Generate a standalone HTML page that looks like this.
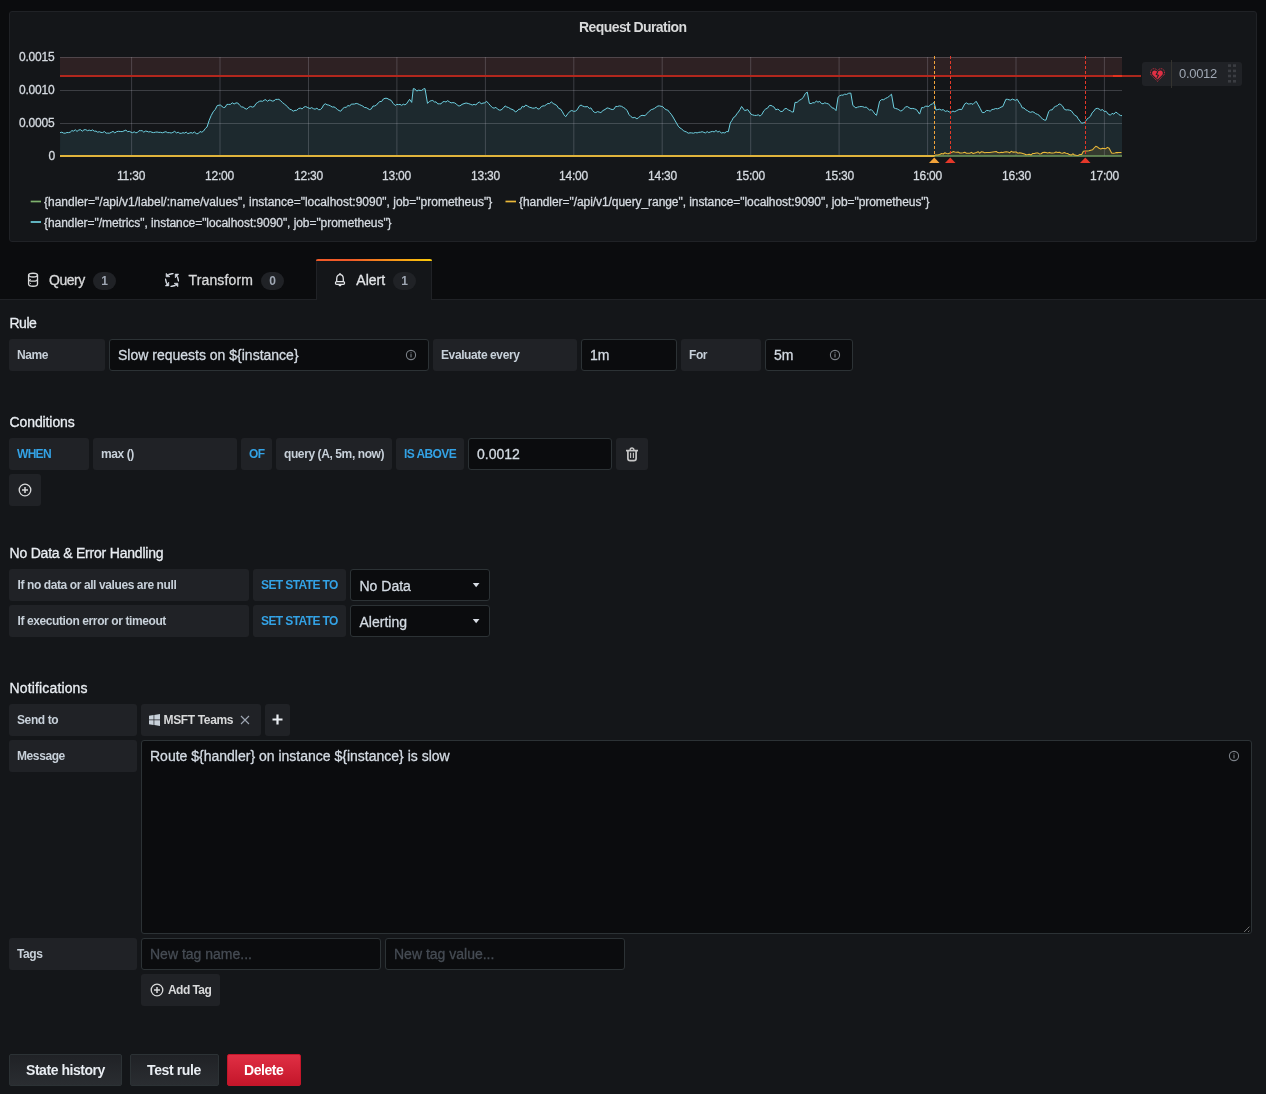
<!DOCTYPE html>
<html><head><meta charset="utf-8">
<style>
*{box-sizing:border-box;margin:0;padding:0}
body{will-change:transform}html,body{width:1266px;height:1094px;overflow:hidden;background:#141619;font-family:"Liberation Sans",sans-serif;color:#c7d0d9}
.abs{position:absolute}
.top{position:absolute;left:0;top:0;width:1266px;height:299px;background:#0b0c0e}
.panel{position:absolute;left:9px;top:11px;width:1248px;height:231px;background:#141619;border:1px solid #202226;border-radius:3px}
.t{position:absolute;white-space:nowrap;line-height:1}
.ax{font-size:12px;color:#d5dae0}
.lg{font-size:12px;color:#d5dae0}
.tabline{position:absolute;left:0;top:299px;width:1266px;height:1px;background:#202226}
.tab{position:absolute;top:259px;height:40px;font-size:14px;color:#c7d0d9}
.badge{position:absolute;height:18px;border-radius:9px;background:#202226;color:#9fa7b3;font-size:12px;font-weight:700;text-align:center;line-height:18px}
.activetab{position:absolute;left:316px;top:259px;width:116px;height:41px;background:#141619;border-left:1px solid #202226;border-right:1px solid #202226}
.activetab:before{content:"";position:absolute;left:-1px;right:-1px;top:0;height:2px;background:linear-gradient(to right,#f05a28 30%,#fbca0a 99%);border-radius:2px 2px 0 0}
.h{font-size:14px;color:#e9edf2}
.lbl{position:absolute;height:32px;background:#202226;border-radius:3px;font-size:12px;font-weight:700;color:#c7d0d9}
.lbl span,.inp span,.btn span{position:absolute;white-space:nowrap;line-height:1}
.inp{position:absolute;height:32px;background:#0b0c0e;border:1px solid #2c3235;border-radius:3px;font-size:14px;color:#d3dae2}
.blue{color:#33a2e5}
.btn{position:absolute;height:32px;border-radius:2px;background:linear-gradient(180deg,#202226 0%,#2a2d31 100%);border:1px solid #2c3235;font-size:14px;font-weight:700;color:#e9edf2}
.rs{-webkit-text-stroke:0.3px currentColor}
.inp span,.h,.ax,.lg{-webkit-text-stroke:0.3px currentColor}
</style></head><body>
<div class="top"></div>
<div class="panel"></div>
<div class="t" style="left:579px;top:20px;font-size:14px;font-weight:700;color:#d8d9da;letter-spacing:-0.58px">Request Duration</div>
<svg class="abs" style="left:0;top:0" width="1266" height="300" viewBox="0 0 1266 300">
<rect x="60" y="57" width="1062" height="19" fill="#2e2123"/>
<path d="M60.1,132.6 L61.8,132.2 L63.6,133.1 L65.3,133.2 L66.9,132.5 L68.6,132.6 L70.2,132.2 L71.9,130.6 L73.5,131.1 L75.3,129.8 L77.0,131.4 L78.8,130.0 L80.5,129.7 L82.3,131.2 L84.0,129.8 L85.8,129.7 L87.5,130.7 L89.2,130.1 L90.9,130.7 L92.6,129.9 L94.3,131.2 L96.0,131.1 L97.7,132.2 L99.3,131.7 L101.0,132.4 L102.7,132.5 L104.4,131.5 L106.1,133.2 L107.7,133.1 L109.4,133.2 L111.2,132.4 L113.0,131.4 L114.8,132.9 L116.6,131.7 L118.5,131.3 L120.3,131.5 L122.2,131.6 L124.0,130.9 L125.9,130.1 L127.6,131.7 L129.3,131.3 L131.0,132.2 L132.6,132.7 L134.2,131.8 L135.8,132.8 L137.4,132.5 L139.0,130.7 L140.6,130.7 L142.2,130.7 L143.8,132.2 L145.4,131.1 L147.0,131.3 L148.7,132.0 L150.3,131.6 L152.0,132.3 L153.6,132.6 L155.4,132.2 L157.1,132.0 L158.9,132.4 L160.6,132.3 L162.4,132.8 L164.1,132.2 L165.9,131.7 L167.7,132.7 L169.4,132.6 L171.2,133.0 L172.9,132.4 L174.7,131.3 L176.4,132.9 L178.2,132.2 L179.8,133.3 L181.4,133.3 L183.0,132.7 L184.6,133.1 L186.2,132.1 L187.8,133.6 L189.4,133.1 L191.0,132.6 L192.6,133.2 L194.4,132.0 L196.3,133.6 L198.1,133.7 L200.0,131.5 L201.8,132.2 L203.5,131.1 L205.3,128.5 L207.0,127.0 L209.1,120.6 L211.1,115.7 L213.2,111.8 L215.2,109.5 L217.3,105.5 L220.3,105.0 L223.4,107.5 L225.1,107.3 L226.9,104.4 L228.6,104.4 L230.4,104.4 L232.3,102.8 L234.1,104.0 L236.0,102.9 L237.8,103.0 L239.6,105.2 L241.4,106.8 L243.2,107.1 L245.0,108.5 L246.8,109.2 L248.7,107.3 L250.5,106.4 L252.4,107.1 L254.2,106.5 L255.9,103.7 L257.7,102.4 L259.4,101.3 L261.0,101.0 L262.6,101.3 L264.2,100.1 L265.9,99.7 L267.5,101.4 L269.1,100.0 L270.7,100.3 L272.3,101.1 L274.0,100.8 L275.6,99.4 L277.3,99.4 L278.9,99.3 L280.7,100.8 L282.5,102.6 L284.3,104.0 L286.0,105.4 L287.8,107.0 L289.6,109.2 L291.4,109.7 L293.2,111.2 L295.0,110.4 L296.7,110.3 L298.5,108.6 L300.3,108.1 L302.1,108.9 L303.8,107.2 L305.6,106.5 L307.8,107.6 L310.0,108.5 L311.7,107.6 L313.4,108.7 L315.1,109.2 L316.9,108.2 L318.6,109.7 L320.3,109.6 L322.0,108.0 L323.7,104.8 L325.4,103.8 L327.1,104.8 L328.8,105.1 L330.5,105.9 L332.2,107.0 L334.0,106.9 L335.7,107.9 L337.4,109.5 L339.1,110.6 L340.8,111.2 L342.6,108.7 L344.4,107.4 L346.2,107.3 L348.0,105.5 L349.6,106.1 L351.3,104.1 L352.9,104.1 L354.6,104.0 L356.2,103.4 L357.9,103.8 L359.6,104.7 L361.2,105.3 L362.9,106.2 L364.6,107.5 L366.2,107.6 L367.9,108.6 L369.6,109.6 L371.3,108.9 L373.0,106.0 L374.7,106.0 L376.4,105.1 L378.2,102.9 L379.9,101.5 L381.6,101.5 L383.3,99.0 L385.0,98.3 L387.0,98.3 L389.1,99.5 L391.1,100.3 L393.1,103.3 L395.2,105.5 L396.8,104.4 L398.4,104.6 L400.0,104.4 L401.7,105.3 L403.3,104.2 L404.9,104.8 L406.5,103.8 L409.6,99.3 L411.7,102.4 L413.3,88.6 L415.1,89.1 L416.8,91.1 L418.4,90.2 L420.1,90.4 L421.7,90.4 L423.4,89.0 L425.0,88.6 L427.5,103.4 L429.4,101.4 L431.2,100.7 L432.8,100.5 L434.5,102.0 L436.1,101.9 L437.8,103.9 L439.4,103.8 L441.0,103.9 L442.7,101.9 L444.3,101.5 L446.0,102.0 L447.6,100.7 L449.4,101.8 L451.1,102.9 L452.9,102.6 L454.6,102.9 L456.4,104.0 L458.1,105.8 L459.9,105.9 L462.0,104.4 L464.0,103.6 L466.1,103.0 L468.2,103.5 L470.2,104.2 L472.3,105.0 L474.1,104.3 L475.9,105.0 L477.7,102.9 L479.5,102.1 L481.2,103.7 L483.0,103.1 L484.8,102.8 L486.6,101.3 L488.6,103.5 L490.7,105.9 L492.4,107.6 L494.1,108.2 L495.9,107.3 L497.6,109.2 L499.3,110.1 L501.0,110.0 L503.1,108.3 L505.1,105.9 L506.8,107.0 L508.5,107.5 L510.2,108.6 L512.0,109.4 L513.7,110.0 L515.4,112.0 L517.1,111.0 L518.8,109.2 L520.5,109.2 L522.3,106.3 L524.0,107.1 L525.7,105.0 L527.5,106.0 L529.2,107.1 L531.0,107.6 L532.7,108.2 L534.5,108.1 L536.2,107.4 L538.0,109.1 L539.7,108.7 L541.3,106.6 L543.0,105.9 L544.6,105.8 L546.3,104.6 L548.0,103.4 L549.6,103.7 L551.3,101.8 L553.2,103.5 L555.0,104.4 L556.9,105.6 L558.7,108.4 L560.6,109.1 L562.3,111.6 L564.0,114.8 L565.7,116.7 L567.9,113.6 L570.1,111.2 L571.8,110.5 L573.6,111.3 L575.3,111.2 L577.2,109.8 L579.1,106.3 L581.0,105.0 L582.6,106.0 L584.3,106.7 L586.0,106.8 L587.6,106.5 L589.2,108.4 L590.9,107.9 L592.5,110.4 L594.2,112.2 L595.8,112.6 L597.5,111.6 L599.2,112.1 L600.9,112.6 L603.0,110.5 L605.0,109.5 L607.1,107.9 L608.8,108.3 L610.5,109.0 L612.2,109.6 L613.9,109.2 L615.7,106.4 L617.4,106.5 L619.4,105.9 L621.5,106.3 L623.5,107.5 L625.4,108.7 L627.2,110.7 L629.1,114.7 L630.9,116.5 L632.8,117.8 L634.8,117.4 L636.9,118.8 L638.6,117.6 L640.3,116.1 L642.0,115.3 L645.1,115.7 L647.2,113.3 L649.2,111.3 L651.3,109.6 L652.9,109.2 L654.6,108.3 L656.2,107.1 L657.9,106.0 L659.5,105.9 L661.1,106.3 L662.8,106.7 L664.4,108.5 L666.1,109.7 L667.7,110.0 L669.5,112.3 L671.2,114.2 L673.0,117.0 L674.7,120.0 L676.5,123.1 L678.2,126.1 L680.0,128.0 L681.6,128.8 L683.3,130.7 L684.9,131.4 L686.6,132.0 L688.2,133.2 L690.0,132.8 L691.7,132.9 L693.5,133.2 L695.3,132.5 L697.1,132.9 L698.8,132.3 L700.6,132.2 L702.2,131.7 L703.9,132.4 L705.5,132.9 L707.2,131.6 L708.8,132.6 L710.6,131.9 L712.4,131.4 L714.2,131.9 L716.0,130.5 L717.8,132.0 L719.5,131.3 L721.3,133.0 L723.1,132.6 L724.8,132.9 L726.6,131.5 L728.3,131.7 L730.3,122.9 L731.9,120.5 L733.5,117.4 L735.1,116.6 L736.8,113.9 L738.4,112.0 L740.0,109.5 L741.6,106.5 L744.7,110.6 L747.8,109.6 L750.9,114.1 L752.7,114.9 L754.6,115.4 L756.4,115.4 L758.3,114.8 L760.1,116.1 L762.0,114.2 L763.8,110.8 L765.7,109.0 L767.5,108.2 L769.4,105.5 L771.0,105.4 L772.6,106.3 L774.2,107.2 L775.8,109.8 L777.4,109.2 L779.0,109.7 L780.6,111.6 L782.7,111.3 L784.7,108.7 L786.8,108.5 L788.4,110.1 L790.1,110.6 L791.8,111.9 L793.4,112.0 L795.0,102.4 L797.1,102.4 L799.1,100.5 L801.2,99.3 L803.2,97.6 L805.3,93.5 L807.3,92.1 L809.4,103.4 L811.1,103.6 L812.8,102.7 L814.5,102.8 L816.3,101.1 L818.0,102.2 L819.7,101.3 L821.4,103.5 L823.1,103.8 L824.8,102.8 L826.5,103.4 L828.2,103.8 L830.2,105.6 L832.1,107.9 L834.0,108.3 L836.0,110.6 L838.1,97.2 L839.7,95.7 L841.4,95.1 L843.0,95.2 L844.6,94.2 L846.7,94.4 L848.7,93.2 L850.8,93.1 L852.9,105.5 L855.9,107.9 L857.6,107.1 L859.4,106.7 L861.1,106.5 L862.8,106.7 L864.5,107.4 L866.2,107.1 L867.9,108.6 L869.6,110.1 L871.3,109.6 L873.0,111.3 L874.8,113.9 L876.5,115.3 L879.6,101.3 L881.6,99.6 L883.7,99.7 L885.7,98.3 L887.6,97.5 L889.6,95.9 L891.5,94.2 L893.9,107.9 L895.6,108.5 L897.2,108.9 L898.9,109.8 L900.5,110.9 L902.2,110.6 L903.9,108.5 L905.6,107.0 L907.3,106.5 L909.1,107.7 L911.0,108.7 L912.8,108.4 L914.7,108.9 L916.5,109.6 L919.6,114.1 L921.7,107.5 L923.5,107.7 L925.3,106.3 L927.1,106.2 L928.9,106.5 L930.6,104.5 L932.3,104.0 L934.0,102.4 L936.0,110.0 L937.8,109.5 L939.6,109.2 L941.4,110.1 L943.2,109.6 L945.3,111.4 L947.3,110.8 L949.4,112.0 L951.2,112.1 L952.9,111.1 L954.7,111.7 L956.4,110.8 L958.2,109.8 L959.9,109.3 L961.7,109.6 L964.8,103.8 L966.4,102.9 L968.1,104.0 L969.7,103.9 L971.4,103.6 L973.0,104.4 L976.1,101.3 L978.2,104.8 L980.2,108.4 L982.3,112.6 L984.3,112.5 L986.4,110.5 L988.4,110.6 L990.2,111.2 L992.0,109.5 L993.8,109.3 L995.6,108.5 L997.4,108.8 L999.2,108.2 L1001.0,107.1 L1002.8,106.5 L1005.9,99.3 L1007.5,99.3 L1009.1,99.8 L1010.7,100.1 L1012.4,99.1 L1014.0,99.8 L1015.6,100.3 L1017.2,99.3 L1018.9,102.1 L1020.6,104.4 L1022.3,107.9 L1024.0,108.0 L1025.7,109.8 L1027.3,110.5 L1029.0,111.8 L1030.7,112.3 L1032.3,111.7 L1034.0,112.3 L1035.7,113.7 L1037.4,114.3 L1039.1,115.2 L1040.8,117.4 L1042.5,118.8 L1044.2,120.0 L1045.9,120.2 L1048.7,111.7 L1050.4,109.9 L1052.2,109.9 L1053.9,107.4 L1055.6,106.3 L1057.4,105.7 L1059.1,103.9 L1060.8,104.5 L1062.6,106.1 L1064.3,109.2 L1066.1,110.0 L1067.8,109.8 L1069.6,110.2 L1071.3,110.8 L1073.0,113.1 L1074.8,115.4 L1076.5,116.0 L1078.2,118.8 L1080.0,121.1 L1081.7,123.3 L1083.5,122.7 L1085.2,122.1 L1086.9,119.2 L1088.7,117.8 L1090.4,116.4 L1092.1,112.9 L1093.9,111.0 L1095.6,108.7 L1097.3,108.3 L1099.1,109.0 L1100.8,110.3 L1102.5,109.5 L1104.3,111.6 L1106.0,111.2 L1108.2,114.1 L1110.4,115.2 L1112.1,113.3 L1113.9,114.2 L1115.6,112.2 L1117.2,112.8 L1118.8,114.5 L1120.4,115.4 L1122.0,115.7 L1122,156 L60,156 Z" fill="#1d292e"/>
<path d="M934.1,155.8 L936.0,154.9 L937.9,155.0 L939.7,154.4 L941.6,153.6 L943.2,154.0 L944.9,152.8 L946.5,153.5 L948.2,153.7 L949.9,153.0 L951.5,152.5 L953.1,151.6 L954.8,152.1 L956.5,152.2 L958.1,152.1 L959.8,152.9 L961.5,152.9 L963.1,152.8 L964.8,152.3 L966.5,153.2 L968.1,153.3 L969.8,153.2 L971.4,152.4 L973.1,153.5 L974.8,152.9 L976.4,152.4 L978.1,151.7 L979.7,153.2 L981.4,151.7 L983.0,152.0 L984.7,152.7 L986.3,152.5 L988.0,152.4 L989.7,152.6 L991.3,152.2 L993.0,151.9 L994.6,151.7 L996.3,151.5 L997.9,152.6 L999.6,152.7 L1001.2,152.3 L1002.9,152.6 L1004.6,151.9 L1006.2,151.7 L1007.9,151.9 L1009.5,152.8 L1011.2,151.3 L1012.8,152.1 L1014.5,152.1 L1016.2,152.0 L1017.8,153.2 L1019.5,152.8 L1021.1,153.0 L1022.8,153.5 L1024.5,154.0 L1026.1,154.8 L1027.8,154.6 L1029.5,154.2 L1031.1,154.9 L1032.8,153.4 L1034.4,153.5 L1036.1,153.0 L1037.8,152.9 L1039.4,153.9 L1041.1,153.7 L1042.8,152.5 L1044.4,152.3 L1046.1,152.6 L1047.7,153.0 L1049.4,152.4 L1051.1,153.0 L1052.7,153.0 L1054.4,152.8 L1056.0,152.1 L1057.7,152.6 L1059.4,152.3 L1061.0,153.0 L1062.7,153.2 L1064.3,152.6 L1066.0,153.2 L1067.7,153.5 L1069.3,154.6 L1071.1,155.1 L1072.8,153.8 L1074.6,155.1 L1076.4,155.3 L1078.2,155.4 L1079.9,154.4 L1081.7,154.6 L1083.4,151.3 L1085.2,151.1 L1087.1,150.9 L1089.0,150.8 L1090.8,150.3 L1092.5,149.8 L1094.1,148.0 L1095.8,146.3 L1097.4,146.9 L1099.1,148.3 L1100.8,148.9 L1102.4,148.3 L1104.1,148.5 L1105.8,148.7 L1107.4,147.4 L1109.1,148.3 L1111.6,152.9 L1113.2,153.3 L1114.9,153.0 L1116.5,152.6 L1118.2,152.6 L1119.8,152.4 L1121.5,152.4 L1122,156 L60,156 Z" fill="rgba(234,184,57,0.12)"/>
<g stroke="rgba(204,204,220,0.22)" stroke-width="1"><line x1="131.6" y1="57" x2="131.6" y2="156"/><line x1="220.0" y1="57" x2="220.0" y2="156"/><line x1="308.5" y1="57" x2="308.5" y2="156"/><line x1="396.9" y1="57" x2="396.9" y2="156"/><line x1="485.4" y1="57" x2="485.4" y2="156"/><line x1="573.8" y1="57" x2="573.8" y2="156"/><line x1="662.2" y1="57" x2="662.2" y2="156"/><line x1="750.7" y1="57" x2="750.7" y2="156"/><line x1="839.1" y1="57" x2="839.1" y2="156"/><line x1="927.6" y1="57" x2="927.6" y2="156"/><line x1="1016.0" y1="57" x2="1016.0" y2="156"/><line x1="1104.4" y1="57" x2="1104.4" y2="156"/><line x1="60" y1="57.5" x2="1122" y2="57.5"/><line x1="60" y1="90.5" x2="1122" y2="90.5"/><line x1="60" y1="123.5" x2="1122" y2="123.5"/></g>
<path d="M934,156 L1122,156" stroke="#6f9a5f" stroke-width="1.5" fill="none"/><path d="M60,156 L934.5,156" stroke="#e0b43c" stroke-width="2" fill="none"/>
<path d="M60.1,132.6 L61.8,132.2 L63.6,133.1 L65.3,133.2 L66.9,132.5 L68.6,132.6 L70.2,132.2 L71.9,130.6 L73.5,131.1 L75.3,129.8 L77.0,131.4 L78.8,130.0 L80.5,129.7 L82.3,131.2 L84.0,129.8 L85.8,129.7 L87.5,130.7 L89.2,130.1 L90.9,130.7 L92.6,129.9 L94.3,131.2 L96.0,131.1 L97.7,132.2 L99.3,131.7 L101.0,132.4 L102.7,132.5 L104.4,131.5 L106.1,133.2 L107.7,133.1 L109.4,133.2 L111.2,132.4 L113.0,131.4 L114.8,132.9 L116.6,131.7 L118.5,131.3 L120.3,131.5 L122.2,131.6 L124.0,130.9 L125.9,130.1 L127.6,131.7 L129.3,131.3 L131.0,132.2 L132.6,132.7 L134.2,131.8 L135.8,132.8 L137.4,132.5 L139.0,130.7 L140.6,130.7 L142.2,130.7 L143.8,132.2 L145.4,131.1 L147.0,131.3 L148.7,132.0 L150.3,131.6 L152.0,132.3 L153.6,132.6 L155.4,132.2 L157.1,132.0 L158.9,132.4 L160.6,132.3 L162.4,132.8 L164.1,132.2 L165.9,131.7 L167.7,132.7 L169.4,132.6 L171.2,133.0 L172.9,132.4 L174.7,131.3 L176.4,132.9 L178.2,132.2 L179.8,133.3 L181.4,133.3 L183.0,132.7 L184.6,133.1 L186.2,132.1 L187.8,133.6 L189.4,133.1 L191.0,132.6 L192.6,133.2 L194.4,132.0 L196.3,133.6 L198.1,133.7 L200.0,131.5 L201.8,132.2 L203.5,131.1 L205.3,128.5 L207.0,127.0 L209.1,120.6 L211.1,115.7 L213.2,111.8 L215.2,109.5 L217.3,105.5 L220.3,105.0 L223.4,107.5 L225.1,107.3 L226.9,104.4 L228.6,104.4 L230.4,104.4 L232.3,102.8 L234.1,104.0 L236.0,102.9 L237.8,103.0 L239.6,105.2 L241.4,106.8 L243.2,107.1 L245.0,108.5 L246.8,109.2 L248.7,107.3 L250.5,106.4 L252.4,107.1 L254.2,106.5 L255.9,103.7 L257.7,102.4 L259.4,101.3 L261.0,101.0 L262.6,101.3 L264.2,100.1 L265.9,99.7 L267.5,101.4 L269.1,100.0 L270.7,100.3 L272.3,101.1 L274.0,100.8 L275.6,99.4 L277.3,99.4 L278.9,99.3 L280.7,100.8 L282.5,102.6 L284.3,104.0 L286.0,105.4 L287.8,107.0 L289.6,109.2 L291.4,109.7 L293.2,111.2 L295.0,110.4 L296.7,110.3 L298.5,108.6 L300.3,108.1 L302.1,108.9 L303.8,107.2 L305.6,106.5 L307.8,107.6 L310.0,108.5 L311.7,107.6 L313.4,108.7 L315.1,109.2 L316.9,108.2 L318.6,109.7 L320.3,109.6 L322.0,108.0 L323.7,104.8 L325.4,103.8 L327.1,104.8 L328.8,105.1 L330.5,105.9 L332.2,107.0 L334.0,106.9 L335.7,107.9 L337.4,109.5 L339.1,110.6 L340.8,111.2 L342.6,108.7 L344.4,107.4 L346.2,107.3 L348.0,105.5 L349.6,106.1 L351.3,104.1 L352.9,104.1 L354.6,104.0 L356.2,103.4 L357.9,103.8 L359.6,104.7 L361.2,105.3 L362.9,106.2 L364.6,107.5 L366.2,107.6 L367.9,108.6 L369.6,109.6 L371.3,108.9 L373.0,106.0 L374.7,106.0 L376.4,105.1 L378.2,102.9 L379.9,101.5 L381.6,101.5 L383.3,99.0 L385.0,98.3 L387.0,98.3 L389.1,99.5 L391.1,100.3 L393.1,103.3 L395.2,105.5 L396.8,104.4 L398.4,104.6 L400.0,104.4 L401.7,105.3 L403.3,104.2 L404.9,104.8 L406.5,103.8 L409.6,99.3 L411.7,102.4 L413.3,88.6 L415.1,89.1 L416.8,91.1 L418.4,90.2 L420.1,90.4 L421.7,90.4 L423.4,89.0 L425.0,88.6 L427.5,103.4 L429.4,101.4 L431.2,100.7 L432.8,100.5 L434.5,102.0 L436.1,101.9 L437.8,103.9 L439.4,103.8 L441.0,103.9 L442.7,101.9 L444.3,101.5 L446.0,102.0 L447.6,100.7 L449.4,101.8 L451.1,102.9 L452.9,102.6 L454.6,102.9 L456.4,104.0 L458.1,105.8 L459.9,105.9 L462.0,104.4 L464.0,103.6 L466.1,103.0 L468.2,103.5 L470.2,104.2 L472.3,105.0 L474.1,104.3 L475.9,105.0 L477.7,102.9 L479.5,102.1 L481.2,103.7 L483.0,103.1 L484.8,102.8 L486.6,101.3 L488.6,103.5 L490.7,105.9 L492.4,107.6 L494.1,108.2 L495.9,107.3 L497.6,109.2 L499.3,110.1 L501.0,110.0 L503.1,108.3 L505.1,105.9 L506.8,107.0 L508.5,107.5 L510.2,108.6 L512.0,109.4 L513.7,110.0 L515.4,112.0 L517.1,111.0 L518.8,109.2 L520.5,109.2 L522.3,106.3 L524.0,107.1 L525.7,105.0 L527.5,106.0 L529.2,107.1 L531.0,107.6 L532.7,108.2 L534.5,108.1 L536.2,107.4 L538.0,109.1 L539.7,108.7 L541.3,106.6 L543.0,105.9 L544.6,105.8 L546.3,104.6 L548.0,103.4 L549.6,103.7 L551.3,101.8 L553.2,103.5 L555.0,104.4 L556.9,105.6 L558.7,108.4 L560.6,109.1 L562.3,111.6 L564.0,114.8 L565.7,116.7 L567.9,113.6 L570.1,111.2 L571.8,110.5 L573.6,111.3 L575.3,111.2 L577.2,109.8 L579.1,106.3 L581.0,105.0 L582.6,106.0 L584.3,106.7 L586.0,106.8 L587.6,106.5 L589.2,108.4 L590.9,107.9 L592.5,110.4 L594.2,112.2 L595.8,112.6 L597.5,111.6 L599.2,112.1 L600.9,112.6 L603.0,110.5 L605.0,109.5 L607.1,107.9 L608.8,108.3 L610.5,109.0 L612.2,109.6 L613.9,109.2 L615.7,106.4 L617.4,106.5 L619.4,105.9 L621.5,106.3 L623.5,107.5 L625.4,108.7 L627.2,110.7 L629.1,114.7 L630.9,116.5 L632.8,117.8 L634.8,117.4 L636.9,118.8 L638.6,117.6 L640.3,116.1 L642.0,115.3 L645.1,115.7 L647.2,113.3 L649.2,111.3 L651.3,109.6 L652.9,109.2 L654.6,108.3 L656.2,107.1 L657.9,106.0 L659.5,105.9 L661.1,106.3 L662.8,106.7 L664.4,108.5 L666.1,109.7 L667.7,110.0 L669.5,112.3 L671.2,114.2 L673.0,117.0 L674.7,120.0 L676.5,123.1 L678.2,126.1 L680.0,128.0 L681.6,128.8 L683.3,130.7 L684.9,131.4 L686.6,132.0 L688.2,133.2 L690.0,132.8 L691.7,132.9 L693.5,133.2 L695.3,132.5 L697.1,132.9 L698.8,132.3 L700.6,132.2 L702.2,131.7 L703.9,132.4 L705.5,132.9 L707.2,131.6 L708.8,132.6 L710.6,131.9 L712.4,131.4 L714.2,131.9 L716.0,130.5 L717.8,132.0 L719.5,131.3 L721.3,133.0 L723.1,132.6 L724.8,132.9 L726.6,131.5 L728.3,131.7 L730.3,122.9 L731.9,120.5 L733.5,117.4 L735.1,116.6 L736.8,113.9 L738.4,112.0 L740.0,109.5 L741.6,106.5 L744.7,110.6 L747.8,109.6 L750.9,114.1 L752.7,114.9 L754.6,115.4 L756.4,115.4 L758.3,114.8 L760.1,116.1 L762.0,114.2 L763.8,110.8 L765.7,109.0 L767.5,108.2 L769.4,105.5 L771.0,105.4 L772.6,106.3 L774.2,107.2 L775.8,109.8 L777.4,109.2 L779.0,109.7 L780.6,111.6 L782.7,111.3 L784.7,108.7 L786.8,108.5 L788.4,110.1 L790.1,110.6 L791.8,111.9 L793.4,112.0 L795.0,102.4 L797.1,102.4 L799.1,100.5 L801.2,99.3 L803.2,97.6 L805.3,93.5 L807.3,92.1 L809.4,103.4 L811.1,103.6 L812.8,102.7 L814.5,102.8 L816.3,101.1 L818.0,102.2 L819.7,101.3 L821.4,103.5 L823.1,103.8 L824.8,102.8 L826.5,103.4 L828.2,103.8 L830.2,105.6 L832.1,107.9 L834.0,108.3 L836.0,110.6 L838.1,97.2 L839.7,95.7 L841.4,95.1 L843.0,95.2 L844.6,94.2 L846.7,94.4 L848.7,93.2 L850.8,93.1 L852.9,105.5 L855.9,107.9 L857.6,107.1 L859.4,106.7 L861.1,106.5 L862.8,106.7 L864.5,107.4 L866.2,107.1 L867.9,108.6 L869.6,110.1 L871.3,109.6 L873.0,111.3 L874.8,113.9 L876.5,115.3 L879.6,101.3 L881.6,99.6 L883.7,99.7 L885.7,98.3 L887.6,97.5 L889.6,95.9 L891.5,94.2 L893.9,107.9 L895.6,108.5 L897.2,108.9 L898.9,109.8 L900.5,110.9 L902.2,110.6 L903.9,108.5 L905.6,107.0 L907.3,106.5 L909.1,107.7 L911.0,108.7 L912.8,108.4 L914.7,108.9 L916.5,109.6 L919.6,114.1 L921.7,107.5 L923.5,107.7 L925.3,106.3 L927.1,106.2 L928.9,106.5 L930.6,104.5 L932.3,104.0 L934.0,102.4 L936.0,110.0 L937.8,109.5 L939.6,109.2 L941.4,110.1 L943.2,109.6 L945.3,111.4 L947.3,110.8 L949.4,112.0 L951.2,112.1 L952.9,111.1 L954.7,111.7 L956.4,110.8 L958.2,109.8 L959.9,109.3 L961.7,109.6 L964.8,103.8 L966.4,102.9 L968.1,104.0 L969.7,103.9 L971.4,103.6 L973.0,104.4 L976.1,101.3 L978.2,104.8 L980.2,108.4 L982.3,112.6 L984.3,112.5 L986.4,110.5 L988.4,110.6 L990.2,111.2 L992.0,109.5 L993.8,109.3 L995.6,108.5 L997.4,108.8 L999.2,108.2 L1001.0,107.1 L1002.8,106.5 L1005.9,99.3 L1007.5,99.3 L1009.1,99.8 L1010.7,100.1 L1012.4,99.1 L1014.0,99.8 L1015.6,100.3 L1017.2,99.3 L1018.9,102.1 L1020.6,104.4 L1022.3,107.9 L1024.0,108.0 L1025.7,109.8 L1027.3,110.5 L1029.0,111.8 L1030.7,112.3 L1032.3,111.7 L1034.0,112.3 L1035.7,113.7 L1037.4,114.3 L1039.1,115.2 L1040.8,117.4 L1042.5,118.8 L1044.2,120.0 L1045.9,120.2 L1048.7,111.7 L1050.4,109.9 L1052.2,109.9 L1053.9,107.4 L1055.6,106.3 L1057.4,105.7 L1059.1,103.9 L1060.8,104.5 L1062.6,106.1 L1064.3,109.2 L1066.1,110.0 L1067.8,109.8 L1069.6,110.2 L1071.3,110.8 L1073.0,113.1 L1074.8,115.4 L1076.5,116.0 L1078.2,118.8 L1080.0,121.1 L1081.7,123.3 L1083.5,122.7 L1085.2,122.1 L1086.9,119.2 L1088.7,117.8 L1090.4,116.4 L1092.1,112.9 L1093.9,111.0 L1095.6,108.7 L1097.3,108.3 L1099.1,109.0 L1100.8,110.3 L1102.5,109.5 L1104.3,111.6 L1106.0,111.2 L1108.2,114.1 L1110.4,115.2 L1112.1,113.3 L1113.9,114.2 L1115.6,112.2 L1117.2,112.8 L1118.8,114.5 L1120.4,115.4 L1122.0,115.7" stroke="#6ed0e0" stroke-width="1" fill="none" stroke-linejoin="round"/>
<path d="M934.1,155.8 L936.0,154.9 L937.9,155.0 L939.7,154.4 L941.6,153.6 L943.2,154.0 L944.9,152.8 L946.5,153.5 L948.2,153.7 L949.9,153.0 L951.5,152.5 L953.1,151.6 L954.8,152.1 L956.5,152.2 L958.1,152.1 L959.8,152.9 L961.5,152.9 L963.1,152.8 L964.8,152.3 L966.5,153.2 L968.1,153.3 L969.8,153.2 L971.4,152.4 L973.1,153.5 L974.8,152.9 L976.4,152.4 L978.1,151.7 L979.7,153.2 L981.4,151.7 L983.0,152.0 L984.7,152.7 L986.3,152.5 L988.0,152.4 L989.7,152.6 L991.3,152.2 L993.0,151.9 L994.6,151.7 L996.3,151.5 L997.9,152.6 L999.6,152.7 L1001.2,152.3 L1002.9,152.6 L1004.6,151.9 L1006.2,151.7 L1007.9,151.9 L1009.5,152.8 L1011.2,151.3 L1012.8,152.1 L1014.5,152.1 L1016.2,152.0 L1017.8,153.2 L1019.5,152.8 L1021.1,153.0 L1022.8,153.5 L1024.5,154.0 L1026.1,154.8 L1027.8,154.6 L1029.5,154.2 L1031.1,154.9 L1032.8,153.4 L1034.4,153.5 L1036.1,153.0 L1037.8,152.9 L1039.4,153.9 L1041.1,153.7 L1042.8,152.5 L1044.4,152.3 L1046.1,152.6 L1047.7,153.0 L1049.4,152.4 L1051.1,153.0 L1052.7,153.0 L1054.4,152.8 L1056.0,152.1 L1057.7,152.6 L1059.4,152.3 L1061.0,153.0 L1062.7,153.2 L1064.3,152.6 L1066.0,153.2 L1067.7,153.5 L1069.3,154.6 L1071.1,155.1 L1072.8,153.8 L1074.6,155.1 L1076.4,155.3 L1078.2,155.4 L1079.9,154.4 L1081.7,154.6 L1083.4,151.3 L1085.2,151.1 L1087.1,150.9 L1089.0,150.8 L1090.8,150.3 L1092.5,149.8 L1094.1,148.0 L1095.8,146.3 L1097.4,146.9 L1099.1,148.3 L1100.8,148.9 L1102.4,148.3 L1104.1,148.5 L1105.8,148.7 L1107.4,147.4 L1109.1,148.3 L1111.6,152.9 L1113.2,153.3 L1114.9,153.0 L1116.5,152.6 L1118.2,152.6 L1119.8,152.4 L1121.5,152.4" stroke="#eab839" stroke-width="1.05" fill="none" stroke-linejoin="round"/>
<line x1="60" y1="76" x2="1122" y2="76" stroke="#b3271d" stroke-width="2"/>
<line x1="1113" y1="76" x2="1122" y2="76" stroke="#e3321f" stroke-width="2"/>
<line x1="1122" y1="76" x2="1141" y2="76" stroke="#a9281d" stroke-width="2"/>
<g stroke-width="1" stroke-dasharray="3,2">
<line x1="934.5" y1="56" x2="934.5" y2="156" stroke="#f2a33a"/>
<line x1="950.5" y1="56" x2="950.5" y2="156" stroke="#e5382a"/>
<line x1="1085.5" y1="56" x2="1085.5" y2="156" stroke="#e5382a"/>
</g>
<path d="M929,163 L934.3,157.5 L939.5,163 Z" fill="#f2a33a"/>
<path d="M945,163 L950.3,157.5 L955.5,163 Z" fill="#e5382a"/>
<path d="M1080,163 L1085.3,157.5 L1090.5,163 Z" fill="#e5382a"/>
<line x1="30.7" y1="201.5" x2="41" y2="201.5" stroke="#7eb26d" stroke-width="1.7"/>
<line x1="505.5" y1="201.5" x2="516" y2="201.5" stroke="#eab839" stroke-width="1.7"/>
<line x1="30.7" y1="222" x2="41" y2="222" stroke="#6ed0e0" stroke-width="1.7"/>
</svg><div class="t ax" style="left:19px;top:51px;letter-spacing:-0.2px">0.0015</div>
<div class="t ax" style="left:19px;top:84px;letter-spacing:-0.2px">0.0010</div>
<div class="t ax" style="left:19px;top:117px;letter-spacing:-0.2px">0.0005</div>
<div class="t ax" style="left:48.5px;top:150px">0</div>
<div class="t ax" style="left:117px;top:170px;letter-spacing:-0.2px">11:30</div>
<div class="t ax" style="left:205px;top:170px;letter-spacing:-0.2px">12:00</div>
<div class="t ax" style="left:294px;top:170px;letter-spacing:-0.2px">12:30</div>
<div class="t ax" style="left:382px;top:170px;letter-spacing:-0.2px">13:00</div>
<div class="t ax" style="left:471px;top:170px;letter-spacing:-0.2px">13:30</div>
<div class="t ax" style="left:559px;top:170px;letter-spacing:-0.2px">14:00</div>
<div class="t ax" style="left:648px;top:170px;letter-spacing:-0.2px">14:30</div>
<div class="t ax" style="left:736px;top:170px;letter-spacing:-0.2px">15:00</div>
<div class="t ax" style="left:825px;top:170px;letter-spacing:-0.2px">15:30</div>
<div class="t ax" style="left:913px;top:170px;letter-spacing:-0.2px">16:00</div>
<div class="t ax" style="left:1002px;top:170px;letter-spacing:-0.2px">16:30</div>
<div class="t ax" style="left:1090px;top:170px;letter-spacing:-0.2px">17:00</div>
<div class="t lg" style="left:44px;top:196px">{handler="/api/v1/label/:name/values", instance="localhost:9090", job="prometheus"}</div>
<div class="t lg" style="left:519px;top:196px;letter-spacing:-0.066px">{handler="/api/v1/query_range", instance="localhost:9090", job="prometheus"}</div>
<div class="t lg" style="left:44px;top:216.5px;letter-spacing:-0.06px">{handler="/metrics", instance="localhost:9090", job="prometheus"}</div>
<!-- threshold handle -->
<div class="abs" style="left:1142px;top:62px;width:100px;height:24px;background:#202226;border-radius:3px"></div>
<div class="abs" style="left:1171px;top:60px;width:1px;height:28px;background:#34332f"></div>
<svg class="abs" style="left:1149.5px;top:67.5px" width="15" height="14" viewBox="0 0 15 14"><path d="M7.5,13.3 L1.3,7.2 C-0.3,5.3 0.3,0.9 3.8,0.7 C5.6,0.6 6.8,1.7 7.5,2.5 C8.2,1.7 9.4,0.6 11.2,0.7 C14.7,0.9 15.3,5.3 13.7,7.2 Z" fill="none" stroke="#e02f44" stroke-width="0.9" stroke-dasharray="1.2,0.6" opacity="0.85"/><path d="M7.5,11.6 L2.8,7 C1.6,5.6 2,2.6 4.4,2.4 C5.8,2.3 6.9,3.2 7.5,3.9 C8.1,3.2 9.2,2.3 10.6,2.4 C13,2.6 13.4,5.6 12.2,7 Z" fill="#e02f44"/><path d="M7.9,3.4 L6.3,6.4 L8.4,7.3 L6.9,10.2" stroke="#202226" stroke-width="1.1" fill="none"/></svg>
<div class="t" style="left:1179px;top:67px;font-size:13px;color:#9fa7b3;letter-spacing:-0.3px">0.0012</div>
<svg class="abs" style="left:1228px;top:64px" width="9" height="19" viewBox="0 0 9 19" fill="#3b3d42"><rect x="0" y="0.3" width="3" height="2.6"/><rect x="0" y="5.6" width="3" height="2.6"/><rect x="0" y="10.7" width="3" height="2.6"/><rect x="0" y="16" width="3" height="2.6"/><rect x="5" y="0.3" width="3" height="2.6"/><rect x="5" y="5.6" width="3" height="2.6"/><rect x="5" y="10.7" width="3" height="2.6"/><rect x="5" y="16" width="3" height="2.6"/></svg>
<!-- tabs -->
<div class="tabline"></div>
<div class="activetab"></div>
<svg class="abs" style="left:27px;top:272px" width="12" height="16" viewBox="0 0 12 16" fill="none" stroke="#d8d9da" stroke-width="1.35"><ellipse cx="6.05" cy="3.1" rx="4.45" ry="1.9"/><path d="M1.6,3.1 V12 C1.6,13.3 3.6,14.2 6.05,14.2 C8.5,14.2 10.5,13.3 10.5,12 V3.1"/><path d="M1.6,7.2 C1.6,8.4 3.6,9.1 6.05,9.1 C8.5,9.1 10.5,8.4 10.5,7.2"/><circle cx="3.5" cy="7.4" r="0.5" fill="#d8d9da" stroke="none"/><circle cx="3.5" cy="11.6" r="0.5" fill="#d8d9da" stroke="none"/></svg>
<div class="t rs" style="left:49px;top:273px;font-size:14px;letter-spacing:-0.45px;color:#d8d9da">Query</div>
<div class="badge" style="left:93px;top:272px;width:23px">1</div>
<svg class="abs" style="left:165px;top:273px" width="14" height="14" viewBox="0 0 14 14" fill="#d8dde5" stroke="#d8dde5"><g stroke-width="0.6" stroke-linejoin="round"><path d="M1.1,0.3 L1.1,3.8 L4.9,3.7 Z"/><path d="M13.7,1.1 L10.2,1.1 L10.3,4.9 Z"/><path d="M12.9,13.7 L12.9,10.2 L9.1,10.3 Z"/><path d="M0.3,12.9 L3.8,12.9 L3.7,9.1 Z"/></g><g fill="none" stroke-width="1.4" stroke-linecap="round"><path d="M3.9,1.5 L7.9,0.5"/><path d="M12.5,3.9 L13.5,7.9"/><path d="M10.1,12.5 L6.1,13.5"/><path d="M1.5,10.1 L0.5,6.1"/></g></svg>
<div class="t rs" style="left:188.5px;top:273px;font-size:14px;color:#d8d9da;letter-spacing:0.15px">Transform</div>
<div class="badge" style="left:261px;top:272px;width:23px">0</div>
<svg class="abs" style="left:333px;top:272px" width="14" height="16" viewBox="0 0 14 16" fill="none" stroke="#e3e5e8" stroke-width="1.3"><path d="M7,1.1 V2.5"/><path d="M3.7,9.3 V6.9 C3.7,4.3 5.1,2.6 7,2.6 C8.9,2.6 10.3,4.3 10.3,6.9 V9.3"/><rect x="2.4" y="9.6" width="9.2" height="2.7" rx="1.3" stroke-width="1.2"/><path d="M5.5,12.9 C5.8,14.7 8.2,14.7 8.5,12.9 Z" fill="#e3e5e8" stroke="none"/></svg>
<div class="t rs" style="left:356.3px;top:273px;font-size:14px;color:#e3e5e8">Alert</div>
<div class="badge" style="left:393px;top:272px;width:23px">1</div>
<div class="t h" style="left:9.5px;top:316px;letter-spacing:-0.5px">Rule</div>
<div class="lbl " style="left:9px;top:339px;width:96px"><span style="left:8px;top:10.2px;letter-spacing:-0.4px">Name</span></div>
<div class="inp" style="left:109px;top:339px;width:320px;height:32px"><span style="left:8px;top:8.2px">Slow requests on ${instance}</span></div>
<svg class="abs" style="left:405px;top:349px" width="12" height="12" viewBox="0 0 12 12"><circle cx="6" cy="6" r="4.6" fill="none" stroke="#7b8087" stroke-width="1.1"/><rect x="5.45" y="5.1" width="1.1" height="3.3" fill="#7b8087"/><rect x="5.45" y="3.3" width="1.1" height="1.1" fill="#7b8087"/></svg><div class="lbl " style="left:433px;top:339px;width:144px"><span style="left:8px;top:10.2px;letter-spacing:-0.4px">Evaluate every</span></div>
<div class="inp" style="left:581px;top:339px;width:96px;height:32px"><span style="left:8px;top:8.2px">1m</span></div>
<div class="lbl " style="left:681px;top:339px;width:80px"><span style="left:8px;top:10.2px;letter-spacing:-0.4px">For</span></div>
<div class="inp" style="left:765px;top:339px;width:88px;height:32px"><span style="left:8px;top:8.2px">5m</span></div>
<svg class="abs" style="left:829px;top:349px" width="12" height="12" viewBox="0 0 12 12"><circle cx="6" cy="6" r="4.6" fill="none" stroke="#7b8087" stroke-width="1.1"/><rect x="5.45" y="5.1" width="1.1" height="3.3" fill="#7b8087"/><rect x="5.45" y="3.3" width="1.1" height="1.1" fill="#7b8087"/></svg><div class="t h" style="left:9.5px;top:415px;letter-spacing:-0.1px">Conditions</div>
<div class="lbl blue" style="left:9px;top:438px;width:80px"><span style="left:8px;top:10.2px;letter-spacing:-0.7px">WHEN</span></div>
<div class="lbl " style="left:93px;top:438px;width:144px"><span style="left:8px;top:10.2px;letter-spacing:-0.4px">max ()</span></div>
<div class="lbl blue" style="left:241px;top:438px;width:31px"><span style="left:8px;top:10.2px;letter-spacing:-0.5px">OF</span></div>
<div class="lbl " style="left:276px;top:438px;width:116px"><span style="left:8px;top:10.2px;letter-spacing:-0.4px">query (A, 5m, now)</span></div>
<div class="lbl blue" style="left:396px;top:438px;width:68px"><span style="left:8px;top:10.2px;letter-spacing:-0.6px">IS ABOVE</span></div>
<div class="inp" style="left:468px;top:438px;width:144px;height:32px"><span style="left:8px;top:8.2px">0.0012</span></div>
<div class="lbl" style="left:616px;top:438px;width:32px"></div>
<svg class="abs" style="left:624px;top:446px" width="16" height="16" viewBox="0 0 16 16" fill="none" stroke="#c7c7c7"><path d="M2,4.6 H14" stroke-width="1.7"/><path d="M6.1,4 C6.1,1.4 9.9,1.4 9.9,4" stroke-width="1.4"/><path d="M3.9,5 V12.5 C3.9,14 4.6,14.6 6.1,14.6 H9.9 C11.4,14.6 12.1,14 12.1,12.5 V5" stroke-width="1.7"/><path d="M6.6,6.8 V12 M9.4,6.8 V12" stroke-width="1.1"/></svg>
<div class="lbl" style="left:9px;top:474px;width:32px"></div>
<svg class="abs" style="left:18px;top:483px" width="14" height="14" viewBox="0 0 14 14" fill="none" stroke="#d8d9da"><circle cx="7" cy="7" r="5.8" stroke-width="1.3"/><path d="M7,4 V10 M4,7 H10" stroke-width="1.5"/></svg>
<div class="t h" style="left:9.5px;top:546px;letter-spacing:-0.2px">No Data &amp; Error Handling</div>
<div class="lbl " style="left:9px;top:569px;width:240px"><span style="left:8.5px;top:10.2px;letter-spacing:-0.4px">If no data or all values are null</span></div>
<div class="lbl blue" style="left:253px;top:569px;width:93px"><span style="left:8px;top:10.2px;letter-spacing:-0.6px">SET STATE TO</span></div>
<div class="inp" style="left:350px;top:569px;width:140px;height:32px"><span style="left:8.5px;top:9.2px">No Data</span></div>
<svg class="abs" style="left:472px;top:583px" width="8" height="5" viewBox="0 0 8 5"><path d="M0.8,0 H7.5 L4.15,4.3 Z" fill="#d8dde5"/></svg>
<div class="lbl " style="left:9px;top:605px;width:240px"><span style="left:8.5px;top:10.2px;letter-spacing:-0.4px">If execution error or timeout</span></div>
<div class="lbl blue" style="left:253px;top:605px;width:93px"><span style="left:8px;top:10.2px;letter-spacing:-0.6px">SET STATE TO</span></div>
<div class="inp" style="left:350px;top:605px;width:140px;height:32px"><span style="left:8.5px;top:9.2px">Alerting</span></div>
<svg class="abs" style="left:472px;top:619px" width="8" height="5" viewBox="0 0 8 5"><path d="M0.8,0 H7.5 L4.15,4.3 Z" fill="#d8dde5"/></svg>
<div class="t h" style="left:9.5px;top:681px;letter-spacing:0.15px">Notifications</div>
<div class="lbl " style="left:9px;top:704px;width:128px"><span style="left:8px;top:10.2px;letter-spacing:-0.4px">Send to</span></div>
<div class="lbl" style="left:141px;top:704px;width:120px"></div>
<svg class="abs" style="left:149px;top:714px" width="11" height="12" viewBox="0 0 11 12" fill="#c7d0d9"><path d="M0,1.7 L4.6,1 V5.6 H0 Z M5.3,0.9 L11,0 V5.6 H5.3 Z M0,6.3 H4.6 V11 L0,10.3 Z M5.3,6.3 H11 V12 L5.3,11.1 Z"/></svg>
<div class="t" style="left:163.5px;top:713.6px;font-size:12px;font-weight:700;color:#d8d9da;letter-spacing:-0.35px">MSFT Teams</div>
<svg class="abs" style="left:240px;top:715px" width="10" height="10" viewBox="0 0 10 10" stroke="#9fa7b3" stroke-width="1.1"><path d="M1,1 L9,9 M9,1 L1,9"/></svg>
<div class="lbl" style="left:265px;top:704px;width:25px"></div>
<svg class="abs" style="left:272px;top:714px" width="11" height="11" viewBox="0 0 11 11" stroke="#e9edf2" stroke-width="2.2"><path d="M5.5,0.5 V10.5 M0.5,5.5 H10.5"/></svg>
<div class="lbl " style="left:9px;top:740px;width:128px"><span style="left:8px;top:10.2px;letter-spacing:-0.4px">Message</span></div>
<div class="inp" style="left:141px;top:740px;width:1111px;height:194px"><span style="left:8px;top:8.2px">Route ${handler} on instance ${instance} is slow</span></div>
<svg class="abs" style="left:1228px;top:750px" width="12" height="12" viewBox="0 0 12 12"><circle cx="6" cy="6" r="4.6" fill="none" stroke="#7b8087" stroke-width="1.1"/><rect x="5.45" y="5.1" width="1.1" height="3.3" fill="#7b8087"/><rect x="5.45" y="3.3" width="1.1" height="1.1" fill="#7b8087"/></svg><svg class="abs" style="left:1243px;top:925px" width="8" height="8" viewBox="0 0 8 8" stroke="#b8b8b8" stroke-width="1" stroke-dasharray="1,0.45" fill="none"><path d="M1.5,6.6 L6.6,1.5 M5.4,6.6 L6.6,5.4"/></svg>
<div class="lbl " style="left:9px;top:938px;width:128px"><span style="left:8px;top:10.2px;letter-spacing:-0.4px">Tags</span></div>
<div class="inp" style="left:141px;top:938px;width:240px;height:32px"><span style="left:8px;top:8.2px;color:#464c54">New tag name...</span></div>
<div class="inp" style="left:385px;top:938px;width:240px;height:32px"><span style="left:8px;top:8.2px;color:#464c54">New tag value...</span></div>
<div class="lbl" style="left:141px;top:974px;width:79px"></div>
<svg class="abs" style="left:150px;top:983px" width="14" height="14" viewBox="0 0 14 14" fill="none" stroke="#d8d9da"><circle cx="7" cy="7" r="5.8" stroke-width="1.3"/><path d="M7,4 V10 M4,7 H10" stroke-width="1.5"/></svg>
<div class="t" style="left:168px;top:983.6px;font-size:12px;font-weight:700;color:#d8d9da;letter-spacing:-0.55px">Add Tag</div>
<div class="btn" style="left:9px;top:1054px;width:113px"><span style="left:16px;top:7.6px;letter-spacing:-0.45px">State history</span></div>
<div class="btn" style="left:130px;top:1054px;width:89px"><span style="left:16px;top:7.6px;letter-spacing:-0.37px">Test rule</span></div>
<div class="btn" style="left:227px;top:1054px;width:74px;background:linear-gradient(180deg,#e02f44 0%,#c4162a 100%);border-color:#c4162a;color:#fff"><span style="left:16px;top:7.6px;letter-spacing:-0.44px">Delete</span></div>
</body></html>
